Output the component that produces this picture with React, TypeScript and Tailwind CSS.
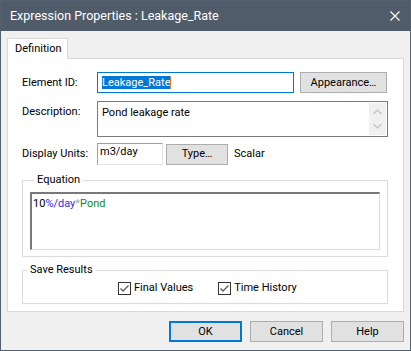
import React from "react";

function Btn({ children, w, primary }: { children: React.ReactNode; w: string; primary?: boolean }) {
  return (
    <div
      className={`${w} h-[21px] flex items-center justify-center bg-[#e1e1e1] ${
        primary ? "border-2 border-[#0078d7]" : "border border-[#adadad]"
      }`}
    >
      {children}
    </div>
  );
}

function Check() {
  return (
    <div className="w-[13px] h-[13px] border border-[#333333] bg-white flex items-center justify-center">
      <svg width="11" height="11" viewBox="0 0 11 11">
        <path d="M1.5 5.5 L4 8 L9.5 2.5" fill="none" stroke="#5a5a5a" strokeWidth="1.3" />
      </svg>
    </div>
  );
}

export default function App() {
  return (
    <div className="w-[411px] h-[351px] border border-[#55606e] bg-[#f0f0f0] flex flex-col font-['Roboto',sans-serif] text-[11px] text-black leading-[14px]">
      {/* Title bar */}
      <div className="h-[30px] bg-[#505c6a] flex items-center pl-[9px] pr-[10px] text-white text-[12.5px]">
        <span className="flex-1">Expression Properties : Leakage_Rate</span>
        <svg width="10" height="10" viewBox="0 0 10 10">
          <path d="M0.5 0.5 L9.5 9.5 M9.5 0.5 L0.5 9.5" stroke="#ffffff" strokeWidth="1.1" />
        </svg>
      </div>

      {/* Body */}
      <div className="flex-1 flex flex-col px-[6px] pt-[7px]">
        <div className="flex">
          <div className="relative z-10 -mb-px h-[21px] w-[61px] bg-white border border-b-0 border-[#d9d9d9] flex items-center pl-[7px]">
            Definition
          </div>
        </div>
        <div className="h-[254px] bg-white border border-[#d9d9d9] pl-[14px] pt-[13px] flex flex-col">
          {/* Element ID */}
          <div className="flex items-center h-[21px]">
            <div className="w-[75px]">Element ID:</div>
            <div className="w-[197px] h-[21px] border border-[#0078d7] flex items-center pl-[4px]">
              <span className="bg-[#0078d7] text-white leading-[13px]">Leakage_Rate</span>
              <span className="w-px h-[13px] bg-[#e07a2a]" />
            </div>
            <div className="ml-[6px]">
              <Btn w="w-[87px]">Appearance…</Btn>
            </div>
          </div>

          {/* Description */}
          <div className="flex mt-[8px]">
            <div className="w-[75px] pt-[4px]">Description:</div>
            <div className="w-[291px] h-[36px] border border-[#7a7a7a] flex">
              <div className="flex-1 pl-[4px] pt-[4px]">Pond leakage rate</div>
              <div className="w-[17px] bg-[#f0f0f0] flex flex-col items-center justify-center gap-[8px] my-px mr-px">
                <svg width="9" height="6" viewBox="0 0 9 6">
                  <path d="M0.5 5 L4.5 1 L8.5 5" fill="none" stroke="#c2c2c2" strokeWidth="1.2" />
                </svg>
                <svg width="9" height="6" viewBox="0 0 9 6">
                  <path d="M0.5 1 L4.5 5 L8.5 1" fill="none" stroke="#c2c2c2" strokeWidth="1.2" />
                </svg>
              </div>
            </div>
          </div>

          {/* Display units */}
          <div className="flex items-center mt-[6px] h-[22px]">
            <div className="w-[75px]">Display Units:</div>
            <div className="w-[66px] h-[22px] border border-[#a0a0a0] border-b-[#e3e3e3] border-r-[#e3e3e3] pl-[2px] pt-[1px]">
              m3/day
            </div>
            <div className="ml-[3px]">
              <Btn w="w-[62px]">Type…</Btn>
            </div>
            <div className="ml-[6px]">Scalar</div>
          </div>

          {/* Equation */}
          <fieldset className="mt-[8px] w-[366px] h-[84px] border border-[#dcdcdc] px-[7px] pb-[6px]">
            <legend className="ml-[4px] px-[3px]">Equation</legend>
            <div className="mt-[5px] h-[58px] border-t-2 border-l-2 border-t-[#787878] border-l-[#787878] border-r border-b border-r-[#dcdcdc] border-b-[#dcdcdc] pl-px pt-[3px]">
              <span>10</span>
              <span className="text-[#2d2de0]">%/day</span>
              <span className="text-[#9aa8c8]">*</span>
              <span className="text-[#128a12]">Pond</span>
            </div>
          </fieldset>

          {/* Save Results */}
          <fieldset className="mt-[6px] w-[366px] h-[41px] border border-[#dcdcdc]">
            <legend className="ml-[4px] px-[3px]">Save Results</legend>
            <div className="flex items-center pl-[95px] mt-[4px]">
              <Check />
              <span className="ml-[3px]">Final Values</span>
              <div className="ml-[25px]">
                <Check />
              </div>
              <span className="ml-[3px]">Time History</span>
            </div>
          </fieldset>
        </div>

        {/* Buttons */}
        <div className="flex justify-end gap-[8px] mt-[9px]">
          <Btn w="w-[73px]" primary>
            OK
          </Btn>
          <Btn w="w-[73px]">Cancel</Btn>
          <Btn w="w-[73px]">Help</Btn>
        </div>
      </div>
    </div>
  );
}
